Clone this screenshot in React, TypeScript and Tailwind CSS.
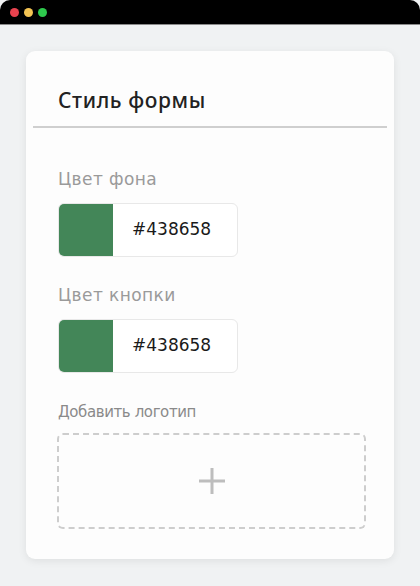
const ColorField = ({label, value}: {label: string; value: string}) => {
    return (
        <div className="flex flex-col">
            <div className="text-[17px] leading-[20px] text-[#9a9a9a] tracking-[0.4px]">{label}</div>
            <div className="mt-[14px] flex h-[54px] w-[180px] rounded-[6px] border border-[#e8e8e8] bg-white overflow-hidden">
                <div className="w-[54px] h-full bg-[#438658]"/>
                <div className="flex-1 flex items-center pl-[19px] text-[17px] text-[#1a1a1a]">
                    {value}
                </div>
            </div>
        </div>
    );
};

const App = () => {
    return (
        <div
            className="w-[420px] h-[586px] flex flex-col bg-[#f0f2f3] overflow-hidden"
            style={{fontFamily: '"DejaVu Sans", "Noto Sans", sans-serif'}}
        >
            <div className="h-[25px] shrink-0 bg-black rounded-t-[10px] border-b border-[#8a8a8a] flex items-center gap-[5px] pl-[10px]">
                <span className="w-[9px] h-[9px] rounded-full bg-[#e8434f]"/>
                <span className="w-[9px] h-[9px] rounded-full bg-[#f4c453]"/>
                <span className="w-[9px] h-[9px] rounded-full bg-[#2ec94d]"/>
            </div>

            <div className="flex-1 px-[26px] pt-[26px] pb-[26px]">
                <div className="h-[508px] bg-[#fdfdfd] rounded-[9px] shadow-[0_2px_8px_rgba(0,0,0,0.08)] flex flex-col">
                    <div
                        className="px-[32px] pt-[36px] pb-[13px] text-[21px] leading-[26px] text-[#222] font-medium tracking-[0.6px]"
                        style={{fontFamily: '"Noto Sans", sans-serif'}}
                    >
                        Стиль формы
                    </div>
                    <div className="mx-[7px] h-[2px] bg-[#cfcfcf]"/>

                    <div className="flex flex-col pl-[32px] pt-[41px]">
                        <ColorField label="Цвет фона" value="#438658"/>
                        <div className="h-[28px]"/>
                        <ColorField label="Цвет кнопки" value="#438658"/>

                        <div className="mt-[30px] text-[15px] leading-[18px] text-[#8a8a8a] tracking-[-0.4px]">
                            Добавить логотип
                        </div>
                        <div className="mt-[12px] ml-[-1px] w-[309px] h-[96px] rounded-[6px] border-2 border-dashed border-[#cdcdcd] flex items-center justify-center">
                            <svg width="28" height="28" viewBox="0 0 28 28">
                                <rect x="12.5" y="1" width="3" height="26" fill="#bdbdbd"/>
                                <rect x="1" y="12.5" width="26" height="3" fill="#bdbdbd"/>
                            </svg>
                        </div>
                    </div>
                </div>
            </div>
        </div>
    );
};

export default App;
